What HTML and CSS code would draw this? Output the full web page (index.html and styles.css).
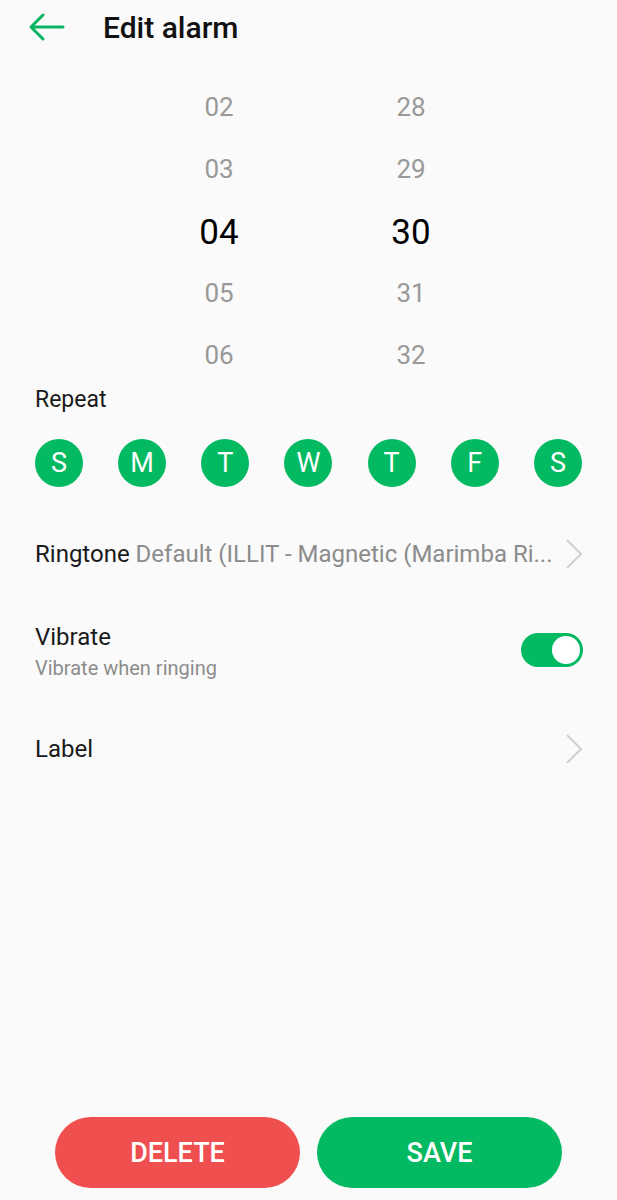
FILE: index.html
```html
<!DOCTYPE html>
<html lang="en">

<head>
    <meta charset="UTF-8">
    <meta name="viewport" content="width=device-width, initial-scale=1.0">
    <title>Edit alarm</title>

    <link rel="stylesheet" href="styles.css">

</head>

<body>
    <div class="page">
        <div class="header">
            <svg class="back" width="40" height="30" viewBox="0 0 40 30">
                <path d="M37 15 H6 M17 3 L5 15 L17 27" fill="none" stroke="#08b462" stroke-width="3" stroke-linecap="round" stroke-linejoin="round" />
            </svg>
            <span class="title">Edit alarm</span>
        </div>

        <div class="picker">
            <div class="col">
                <div class="cell">02</div>
                <div class="cell">03</div>
                <div class="cell selected">04</div>
                <div class="cell">05</div>
                <div class="cell">06</div>
            </div>
            <div class="col">
                <div class="cell">28</div>
                <div class="cell">29</div>
                <div class="cell selected">30</div>
                <div class="cell">31</div>
                <div class="cell">32</div>
            </div>
        </div>

        <div class="section-title">Repeat</div>
        <div class="days">
            <span class="day">S</span>
            <span class="day">M</span>
            <span class="day">T</span>
            <span class="day">W</span>
            <span class="day">T</span>
            <span class="day">F</span>
            <span class="day">S</span>
        </div>

        <div class="row ringtone">
            <span class="row-text">Ringtone <span class="value">Default (ILLIT - Magnetic (Marimba Ri...</span></span>
            <svg class="chevron" width="18" height="32" viewBox="0 0 18 32">
                <path d="M2 2 L16 16 L2 30" fill="none" stroke="#d0d0d0" stroke-width="2" />
            </svg>
        </div>

        <div class="row vibrate">
            <div>
                <div class="row-text">Vibrate</div>
                <div class="sub">Vibrate when ringing</div>
            </div>
            <span class="toggle"><span class="knob"></span></span>
        </div>

        <div class="row label">
            <span class="row-text">Label</span>
            <svg class="chevron" width="18" height="32" viewBox="0 0 18 32">
                <path d="M2 2 L16 16 L2 30" fill="none" stroke="#d0d0d0" stroke-width="2" />
            </svg>
        </div>

        <div class="footer">
            <button type="button" class="btn btn-delete">DELETE</button>
            <button type="button" class="btn btn-save">SAVE</button>
        </div>
    </div>
</body>

</html>
```

FILE: styles.css
```css
body {
    margin: 0;
    background: #fafafa;
    font-family: Roboto, "Noto Sans", sans-serif;
    color: #1a1a1a;
}

.page {
    display: flex;
    flex-direction: column;
    height: 1200px;
}

.header {
    display: flex;
    align-items: center;
    height: 54px;
    padding-left: 26px;
}

.back {
    display: block;
}

.title {
    margin-left: 37px;
    font-size: 30px;
    font-weight: 500;
    color: #111;
}

.picker {
    display: flex;
    gap: 72px;
    padding-left: 159px;
    margin-top: 22px;
}

.col {
    width: 120px;
}

.cell {
    height: 62px;
    line-height: 62px;
    text-align: center;
    font-size: 26px;
    color: #999;
}

.cell.selected {
    font-size: 35px;
    line-height: 66px;
    color: #000;
}

.section-title {
    padding-left: 35px;
    font-size: 23px;
    line-height: 28px;
}

.days {
    display: flex;
    justify-content: space-between;
    padding: 0 35px;
    margin-top: 25px;
}

.day {
    width: 48px;
    height: 48px;
    border-radius: 50%;
    background: #03b962;
    color: #fff;
    font-size: 27px;
    line-height: 48px;
    text-align: center;
}

.row {
    display: flex;
    align-items: center;
    justify-content: space-between;
    padding: 0 34px 0 35px;
}

.row-text {
    font-size: 24px;
    line-height: 30px;
    color: #1a1a1a;
    white-space: nowrap;
}

.value {
    color: #8c8c8c;
}

.ringtone {
    margin-top: 51px;
    gap: 8px;
}

.chevron {
    flex-shrink: 0;
}

.vibrate {
    margin-top: 53px;
}

.vibrate .row-text {
    line-height: 28px;
}

.sub {
    margin-top: 4px;
    font-size: 20px;
    line-height: 26px;
    color: #8c8c8c;
}

.toggle {
    display: flex;
    align-items: center;
    justify-content: flex-end;
    width: 62px;
    height: 34px;
    padding: 0 3px;
    margin-top: -4px;
    box-sizing: border-box;
    border-radius: 17px;
    background: #03b962;
}

.knob {
    width: 28px;
    height: 28px;
    border-radius: 50%;
    background: #fff;
}

.label {
    margin-top: 52px;
}

.footer {
    display: flex;
    gap: 17px;
    padding: 0 55px 12px;
    margin-top: auto;
}

.btn {
    flex: 1;
    height: 71px;
    border: none;
    border-radius: 36px;
    color: #fff;
    font-family: Roboto, "Noto Sans", sans-serif;
    font-size: 27px;
    font-weight: 500;
}

.btn-delete {
    background: #f04f4f;
}

.btn-save {
    background: #03b962;
}
```
